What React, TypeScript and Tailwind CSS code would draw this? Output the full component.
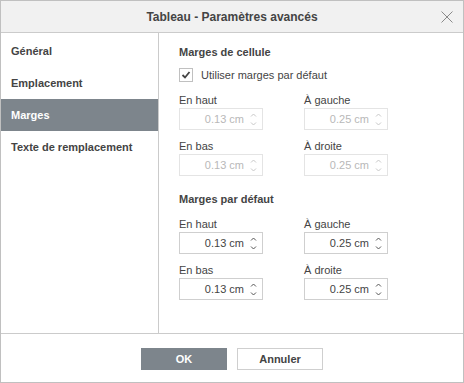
import React from 'react';

const font = { fontFamily: '"Liberation Sans", Arial, sans-serif' };

interface SpinProps {
  value: string;
  disabled?: boolean;
}

const SpinInput: React.FC<SpinProps> = ({ value, disabled }) => {
  const c = disabled ? '#c8c8c8' : '#555555';
  return (
    <div
      className={`relative flex h-[22px] w-[84px] items-center border bg-white ${
        disabled ? 'border-[#e4e4e4]' : 'border-[#cfcfcf]'
      }`}
    >
      <span
        className={`flex-1 pr-[18px] text-right text-[11px] ${disabled ? 'text-[#b8b8b8]' : 'text-[#444]'}`}
      >
        {value}
      </span>
      {/* spinner arrows */}
      <svg className="absolute right-[5px] top-[4px]" width="7" height="13" viewBox="0 0 7 13">
        <path d="M1 3.5 L3.5 1 L6 3.5" fill="none" stroke={c} strokeWidth="1" />
        <path d="M1 9.5 L3.5 12 L6 9.5" fill="none" stroke={c} strokeWidth="1" />
      </svg>
    </div>
  );
};

const Field: React.FC<{ label: string; value: string; disabled?: boolean }> = ({ label, value, disabled }) => (
  <div className="flex flex-col">
    <div className="mb-[1px] h-[14px] text-[11px] leading-[14px] text-[#444]">{label}</div>
    <SpinInput value={value} disabled={disabled} />
  </div>
);

const MarginGrid: React.FC<{ disabled?: boolean }> = ({ disabled }) => (
  <div className="grid grid-cols-[84px_84px] gap-x-[41px] gap-y-[9px]">
    <Field label="En haut" value="0.13 cm" disabled={disabled} />
    <Field label="À gauche" value="0.25 cm" disabled={disabled} />
    <Field label="En bas" value="0.13 cm" disabled={disabled} />
    <Field label="À droite" value="0.25 cm" disabled={disabled} />
  </div>
);

export default function App() {
  const tabs = ['Général', 'Emplacement', 'Marges', 'Texte de remplacement'];

  return (
    <div style={font} className="flex h-[383px] w-[464px] flex-col border border-[#c0c0c0] bg-white text-[#444]">
      {/* Header */}
      <div className="relative flex h-[32px] shrink-0 items-center justify-center border-b border-[#cbcbcb] bg-[#f1f1f1]">
        <span className="text-[12px] font-bold text-[#444]">Tableau - Paramètres avancés</span>
        <svg className="absolute right-[10px] top-[10px]" width="12" height="12" viewBox="0 0 12 12">
          <path d="M0.5 0.5 L11.5 11.5 M11.5 0.5 L0.5 11.5" stroke="#8a8a8a" strokeWidth="1" />
        </svg>
      </div>

      {/* Body */}
      <div className="flex h-[300px] shrink-0">
        <div className="w-[158px] shrink-0 border-r border-[#cbcbcb] pt-[2px]">
          {tabs.map((t) => (
            <div
              key={t}
              className={`flex h-[32px] items-center pl-[10px] text-[11px] font-bold ${
                t === 'Marges' ? 'bg-[#7d858c] text-white' : 'text-[#444]'
              }`}
            >
              {t}
            </div>
          ))}
        </div>

        <div className="flex-1 pl-[20px] pt-[12px]">
          <div className="h-[14px] text-[11px] font-bold leading-[14px]">Marges de cellule</div>
          <label className="mt-[9px] flex h-[14px] items-center">
            <span className="flex h-[14px] w-[14px] items-center justify-center border border-[#c0c0c0] bg-white">
              <svg width="10" height="10" viewBox="0 0 10 10">
                <path d="M1.5 5 L4 7.5 L8.5 2" fill="none" stroke="#444" strokeWidth="1.8" />
              </svg>
            </span>
            <span className="ml-[8px] text-[11px]">Utiliser marges par défaut</span>
          </label>
          <div className="mt-[11px]">
            <MarginGrid disabled />
          </div>

          <div className="mt-[16px] h-[14px] text-[11px] font-bold leading-[14px]">Marges par défaut</div>
          <div className="mt-[11px]">
            <MarginGrid />
          </div>
        </div>
      </div>

      {/* Footer */}
      <div className="flex flex-1 justify-center gap-[10px] border-t border-[#cbcbcb] pt-[14px]">
        <button className="h-[22px] w-[86px] bg-[#7d858c] text-[11px] font-bold text-white">OK</button>
        <button className="h-[22px] w-[86px] border border-[#cfcfcf] bg-white text-[11px] font-bold text-[#444]">
          Annuler
        </button>
      </div>
    </div>
  );
}
